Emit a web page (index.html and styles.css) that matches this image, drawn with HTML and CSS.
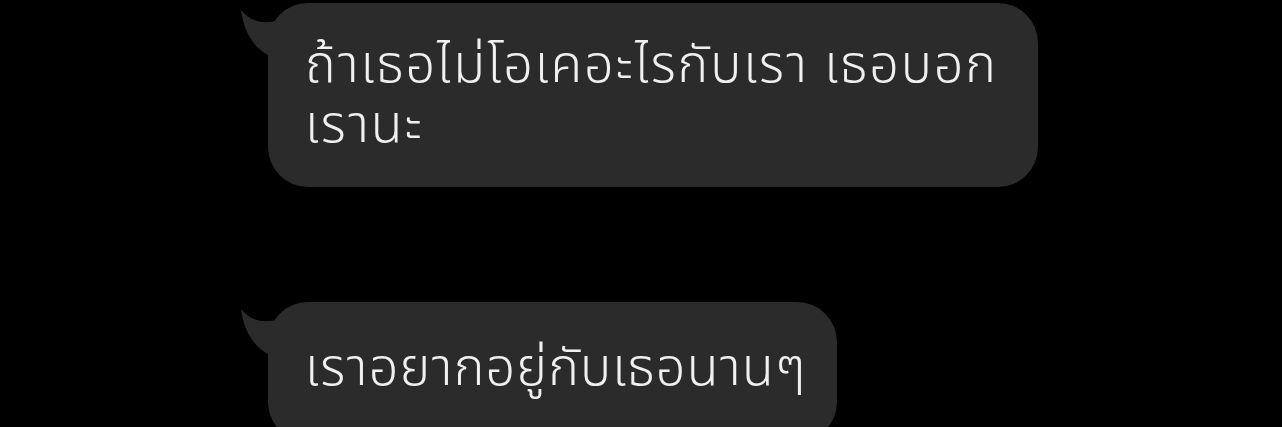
FILE: index.html
```html
<!DOCTYPE html>
<html lang="th">
<head>
<meta charset="utf-8">
<link rel="stylesheet" href="styles.css">
</head>
<body>
<div class="chat">
  <div class="bubble b1">
    <svg class="tail" width="70" height="70" viewBox="0 0 70 70"><path d="M1 7 C 8 16, 18 20, 30 19 C 40 18, 50 12, 58 6 L 62 70 L 28 70 L 28 52 C 14 44, 4 30, 1 7 Z"/></svg>
    <p class="text">ถ้าเธอไม่โอเคอะไรกับเรา เธอบอก<br>เรานะ</p>
  </div>
  <div class="bubble b2">
    <svg class="tail" width="70" height="70" viewBox="0 0 70 70"><path d="M1 7 C 8 16, 18 20, 30 19 C 40 18, 50 12, 58 6 L 62 70 L 28 70 L 28 52 C 14 44, 4 30, 1 7 Z"/></svg>
    <p class="text">เราอยากอยู่กับเธอนานๆ</p>
  </div>
</div>
</body>
</html>
```
FILE: styles.css
```css
html, body {
  margin: 0;
  padding: 0;
  background: #000;
}
body {
  width: 1282px;
  height: 427px;
  overflow: hidden;
  font-family: "Noto Sans Thai", "Noto Sans", "DejaVu Sans", sans-serif;
}
.chat {
  display: flex;
  flex-direction: column;
  align-items: flex-start;
  gap: 115px;
  padding: 3px 0 0 268px;
}
.bubble {
  position: relative;
  background: #2b2b2b;
  border-radius: 40px;
  box-sizing: border-box;
  padding: 0 37px;
}
.b1 {
  width: 770px;
  height: 184px;
  padding-top: 33px;
}
.b2 {
  width: 569px;
  height: 140px;
  padding-top: 37px;
}
.tail {
  position: absolute;
  left: -28px;
  top: 0;
}
.tail path {
  fill: #2b2b2b;
}
.text {
  margin: 0;
  color: #f0f0f0;
  font-size: 52px;
  font-weight: 350;
  letter-spacing: 1.9px;
  line-height: 60px;
  white-space: nowrap;
}
.b2 .text {
  letter-spacing: 1.2px;
}
```
